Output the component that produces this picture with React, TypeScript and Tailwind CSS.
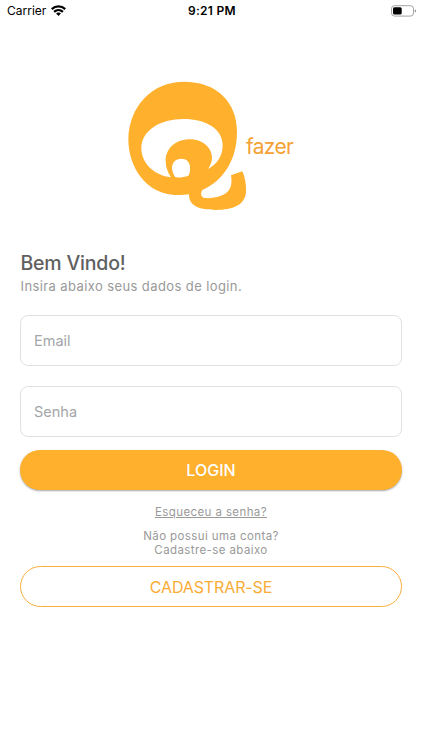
import React from "react";

function StatusBar() {
  return (
    <header className="grid h-[22px] grid-cols-3 items-center pl-[7px] pr-[5px] text-[12px] leading-none text-black">
      <div className="flex items-center gap-[5px]">
        <span>Carrier</span>
        <svg className="mb-[2px]" width="15" height="11" viewBox="0 0 15 11" aria-hidden="true">
          <g fill="none" stroke="#000" strokeWidth="2.3">
            <path d="M0.8 4.1C4.6 0.4 10.4 0.4 14.2 4.1" />
            <path d="M3.1 6.8C5.6 4.5 9.4 4.5 11.9 6.8" />
          </g>
          <path d="M5.1 8.5C6.5 7.3 8.5 7.3 9.9 8.5L7.5 10.9Z" />
        </svg>
      </div>
      <span className="text-center text-[12px] font-semibold tracking-[0.3px]">9:21 PM</span>
      <svg className="mb-[1px] justify-self-end" width="26" height="12" viewBox="0 0 26 12" aria-hidden="true">
        <rect x="0.5" y="0.7" width="22" height="10.4" rx="3" fill="none" stroke="#a3a3a3" />
        <rect x="2" y="2.2" width="8.7" height="7.4" rx="1.5" />
        <path d="M23.8 4.2C25.5 4.8 25.5 7 23.8 7.6Z" fill="#8d8d8d" />
      </svg>
    </header>
  );
}

function Logo() {
  return (
    <div className="mt-12 flex h-[150px] pl-[120px]">
      <svg className="shrink-0" width="126" height="150" viewBox="0 0 378 450" overflow="visible" aria-hidden="true">
        <path
          fill="#ffb02c"
          fillRule="evenodd"
          d="M192 35C290 35 351 96 351 185C351 266 314 329 247 360C242 368 242 376 248 382C258 387 283 384 301 378C332 368 338 345 333 316L367 304C376 323 379 345 378 367C375 405 339 420 288 420C235 419 207 408 207 373C192 375 175 375 157 374C78 367 25 292 25 207C27 111 94 35 192 35Z
          M190 147C121 147 64 181 64 235C64 280 103 317 153 322C143 307 137 291 137 273C137 235 167 208 210 208C248 208 276 233 276 263C276 276 271 287 264 297C291 284 308 257 308 226C308 177 258 147 190 147Z
          M184 266C166 266 156 278 156 294C157 306 161 315 166 322C181 323 194 321 205 317C210 309 211 301 210 291C209 276 200 266 184 266Z"
        />
      </svg>
      <span className="pt-[64px] text-[21px] leading-[26px] tracking-[-0.7px] text-[#f5a133]">fazer</span>
    </div>
  );
}

function Field({ label, type }: { label: string; type: string }) {
  return (
    <input
      type={type}
      placeholder={label}
      aria-label={label}
      className="block h-[51px] w-full rounded-[8px] border border-[#e1e1e1] bg-white px-[13px] text-[14.5px] text-[#555] outline-none placeholder:text-[#a3a6a8]"
    />
  );
}

export default function App() {
  return (
    <div className="min-h-[750px] w-full bg-white font-['Inter','Liberation_Sans',sans-serif]">
      <StatusBar />
      <Logo />
      <main className="px-5 pt-[30px]">
        <h1 className="pl-[0.5px] text-[19.5px] leading-[26px] font-[450] tracking-[-0.2px] text-[#606060]">Bem Vindo!</h1>
        <p className="pl-[0.5px] text-[13px] leading-[20px] tracking-[0.4px] text-[#999]">Insira abaixo seus dados de login.</p>
        <form className="mt-[19px]" onSubmit={(e) => e.preventDefault()}>
          <div className="flex flex-col gap-5">
            <Field label="Email" type="email" />
            <Field label="Senha" type="password" />
          </div>
          <button className="mt-[13px] block h-10 w-full rounded-full bg-[#ffb02c] text-[16px] font-medium text-white shadow-[0_1px_2px_rgba(0,0,0,0.35)]">LOGIN</button>
        </form>
        <div className="mt-[15px] text-center text-[11.5px] leading-[14px] tracking-[0.4px] text-[#999]">
          <a className="block leading-[15px] underline decoration-1 underline-offset-1">Esqueceu a senha?</a>
          <p className="mt-[9px]">Não possui uma conta?<br />Cadastre-se abaixo</p>
        </div>
        <button className="mt-[9px] block h-[41px] w-full rounded-full border border-[#f9af3d] text-[16px] tracking-[-0.12px] text-[#f9ac35]">CADASTRAR-SE</button>
      </main>
    </div>
  );
}
